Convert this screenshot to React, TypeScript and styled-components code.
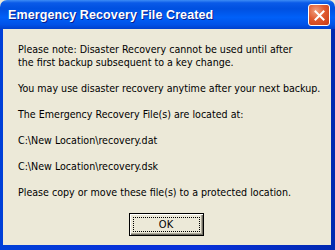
import React from 'react';
import styled, { createGlobalStyle } from 'styled-components';

const GlobalStyle = createGlobalStyle`
  html, body {
    margin: 0;
    padding: 0;
    background: #ece9d8;
  }
`;

const Window = styled.div`
  width: 335px;
  height: 250px;
  display: flex;
  flex-direction: column;
  box-sizing: border-box;
  font-family: "DejaVu Sans Condensed", "Liberation Sans", sans-serif;
`;

const TitleBar = styled.div`
  height: 29px;
  flex-shrink: 0;
  display: flex;
  align-items: center;
  justify-content: space-between;
  padding: 0 5px 0 8px;
  box-sizing: border-box;
  border-radius: 7px 7px 0 0;
  background: linear-gradient(
    180deg,
    #3d8cf5 0%,
    #0a5ae8 10%,
    #0050e0 30%,
    #0060f8 60%,
    #0052e8 85%,
    #0040cc 100%
  );
`;

const Title = styled.span`
  font-family: "Liberation Sans", Arial, sans-serif;
  font-weight: bold;
  font-size: 12.5px;
  color: #ffffff;
  text-shadow: 1px 1px 0 #0a1e8c;
  letter-spacing: 0.1px;
`;

const CloseButton = styled.button`
  width: 22px;
  height: 22px;
  padding: 0;
  margin-top: 1px;
  border: 1px solid #ffffff;
  border-radius: 3px;
  background: radial-gradient(circle at 35% 30%, #f0a080 0%, #e05a30 45%, #c83a12 100%);
  display: flex;
  align-items: center;
  justify-content: center;
  box-sizing: border-box;
`;

const Frame = styled.div`
  flex: 1;
  display: flex;
  padding: 0 4px 5px 3px;
  background: linear-gradient(90deg, #0040d8 0%, #0831d9 40%, #0831d9 60%, #0028b0 100%);
  min-height: 0;
`;

const Body = styled.div`
  flex: 1;
  background: #ece9d8;
  padding: 14px 0 0 15px;
  display: flex;
  flex-direction: column;
  color: #000000;
  font-size: 10.6px;
  line-height: 13px;
  white-space: nowrap;
`;

const Paragraph = styled.p`
  margin: 0 0 13px 0;
`;

const ButtonRow = styled.div`
  display: flex;
  justify-content: center;
  margin-top: 1px;
  padding-right: 17px;
`;

const OkButton = styled.button`
  width: 75px;
  height: 23px;
  padding: 3px;
  box-sizing: border-box;
  background: #ece9d8;
  border: 1px solid #000000;
  box-shadow: inset 1px 1px 0 #ffffff, inset -1px -1px 0 #716f64, inset -2px -2px 0 #aca899;
  font-family: "DejaVu Sans Condensed", "Liberation Sans", sans-serif;
  font-size: 11px;
  color: #000000;
  display: flex;
`;

const FocusRing = styled.span`
  flex: 1;
  border: 1px dotted #000000;
  display: flex;
  align-items: center;
  justify-content: center;
`;

export default function App() {
  return (
    <>
      <GlobalStyle />
      <Window>
        <TitleBar>
          <Title>Emergency Recovery File Created</Title>
          <CloseButton aria-label="Close">
            <svg width="11" height="11" viewBox="0 0 11 11">
              <path d="M1.5 1.5 L9.5 9.5 M9.5 1.5 L1.5 9.5" stroke="#ffffff" strokeWidth="2" strokeLinecap="square" />
            </svg>
          </CloseButton>
        </TitleBar>
        <Frame>
          <Body>
            <Paragraph>
              Please note: Disaster Recovery cannot be used until after
              <br />
              the first backup subsequent to a key change.
            </Paragraph>
            <Paragraph>You may use disaster recovery anytime after your next backup.</Paragraph>
            <Paragraph>The Emergency Recovery File(s) are located at:</Paragraph>
            <Paragraph>C:\New Location\recovery.dat</Paragraph>
            <Paragraph>C:\New Location\recovery.dsk</Paragraph>
            <Paragraph>Please copy or move these file(s) to a protected location.</Paragraph>
            <ButtonRow>
              <OkButton>
                <FocusRing>OK</FocusRing>
              </OkButton>
            </ButtonRow>
          </Body>
        </Frame>
      </Window>
    </>
  );
}
